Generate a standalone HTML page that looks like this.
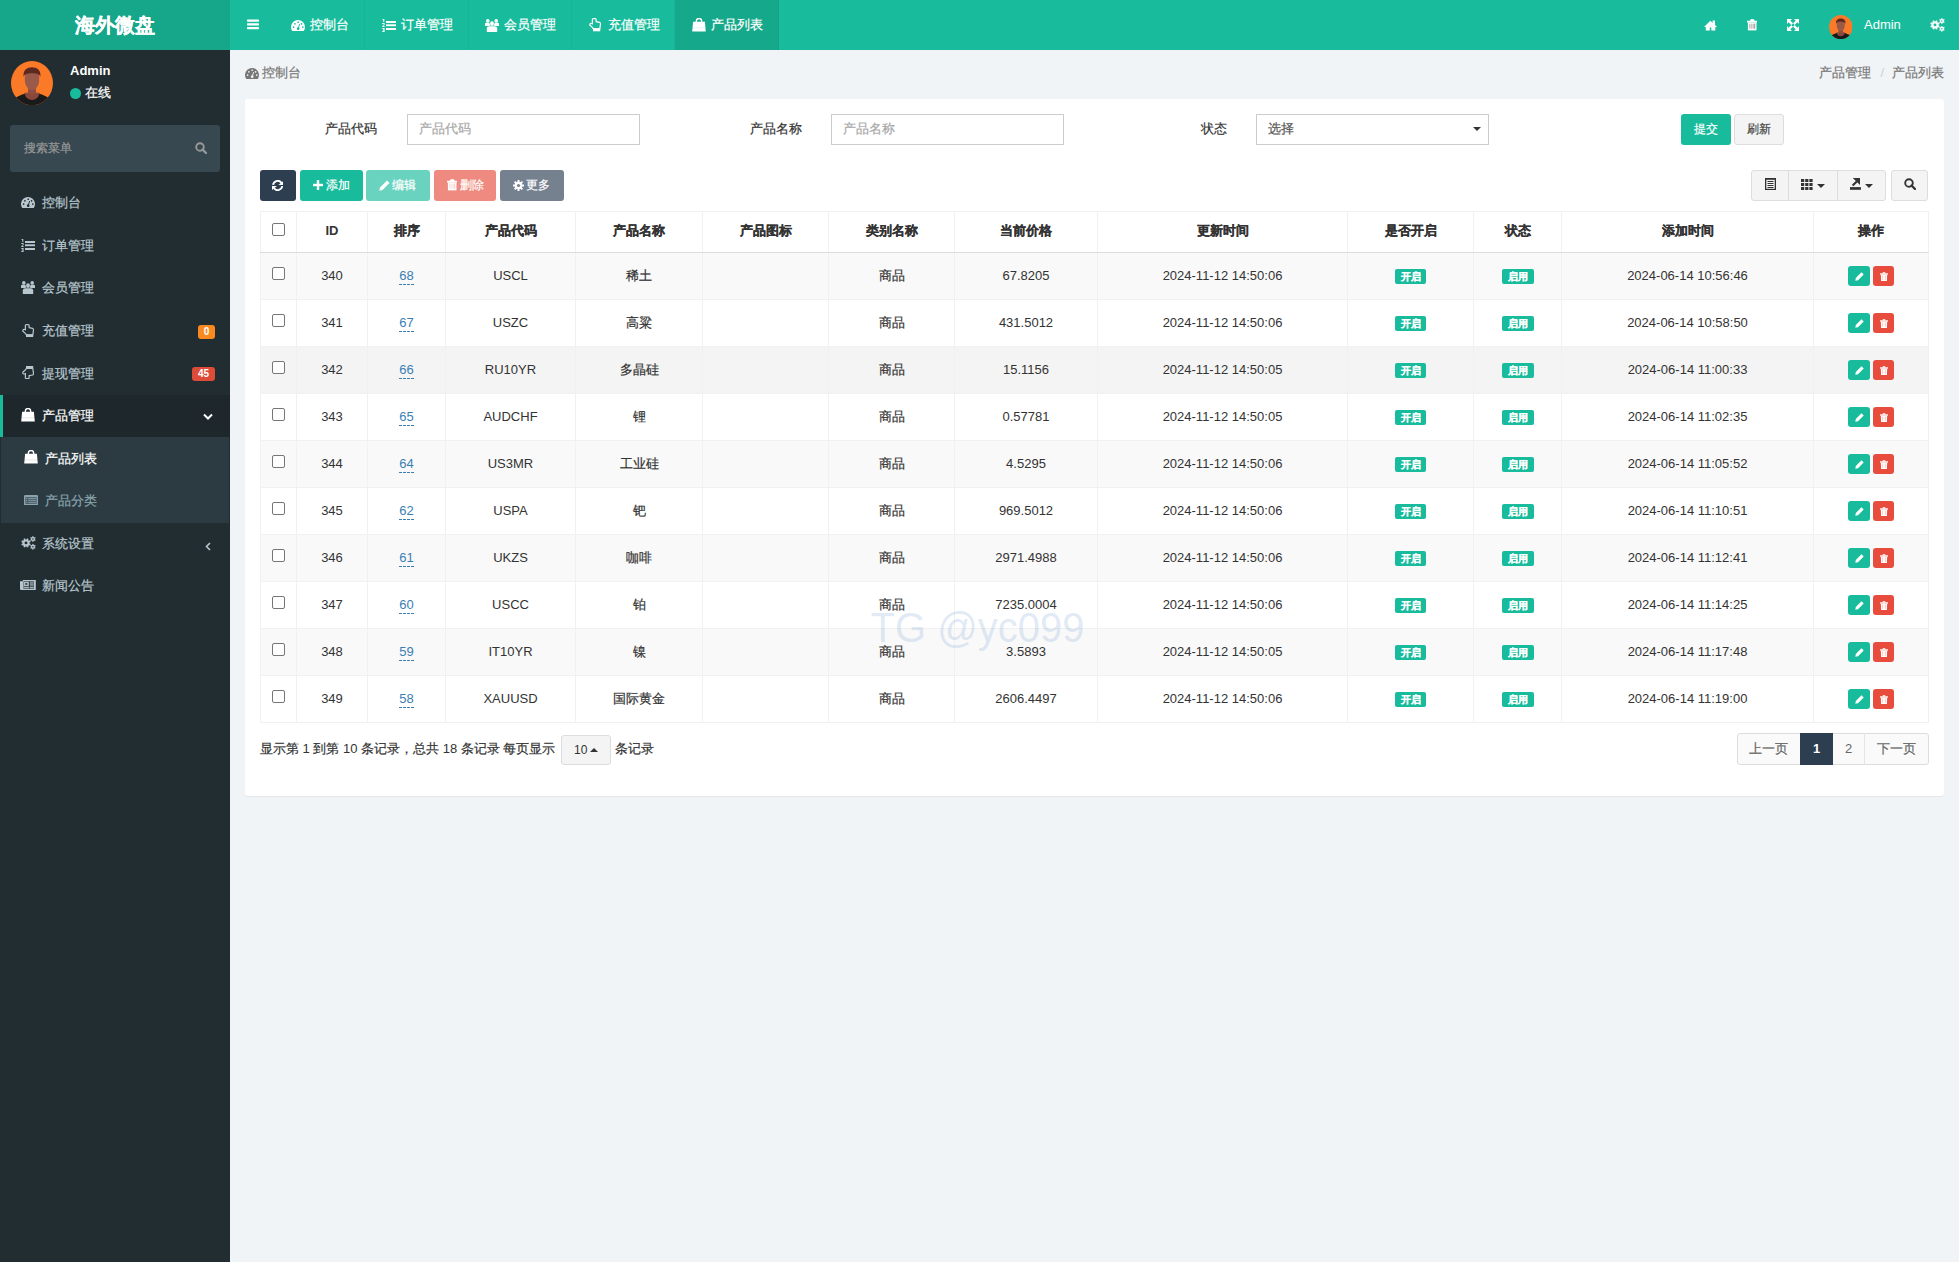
<!DOCTYPE html>
<html><head><meta charset="utf-8"><title>产品列表</title>
<style>
html,body{margin:0;padding:0;}
body{width:1959px;height:1262px;position:relative;overflow:hidden;background:#f1f4f6;
font-family:"Liberation Sans",sans-serif;font-size:13px;color:#333;}
.t{position:absolute;white-space:nowrap;line-height:18px;height:18px;}
svg{display:block}
.c{-webkit-text-stroke:0.2px currentColor}
</style></head><body>

<div style="position:absolute;left:0px;top:0px;width:230px;height:50px;background:#16a68a"></div>
<div style="position:absolute;left:230px;top:0px;width:1729px;height:50px;background:#18bc9c"></div>
<div class="t" style="left:0.0px;top:16px;width:230px;text-align:center;color:#fff;font-size:20px;font-weight:bold;line-height:18px"><span class="c">海外微盘</span></div>
<svg style="position:absolute;left:247px;top:19px;" width="12" height="11" viewBox="0 0 12 11" fill="#fff"><rect x="0" y="0.5" width="12" height="2.2" rx="0.6"/><rect x="0" y="4.3" width="12" height="2.1" rx="0.6"/><rect x="0" y="8" width="12" height="2.2" rx="0.6"/></svg>
<div style="position:absolute;left:364px;top:0px;width:1px;height:50px;background:rgba(0,0,0,0.04)"></div>
<svg style="position:absolute;left:291px;top:19.5px;" width="14" height="11" viewBox="0 0 14 11" fill="#fff"><path d="M1.25,11 A7,7 0 1 1 12.75,11 Z"/><g fill="#18bc9c"><ellipse cx="7.2" cy="2.3" rx="1" ry="0.7"/><circle cx="3.9" cy="3.8" r="0.85"/><circle cx="10.6" cy="3.8" r="0.85"/><circle cx="2.6" cy="7.1" r="0.85"/><circle cx="11.8" cy="7.1" r="0.85"/><circle cx="7.2" cy="8.7" r="1.35"/></g><path d="M7.2,8.5 L8.7,4" stroke="#18bc9c" stroke-width="0.9"/></svg>
<div class="t" style="left:310px;top:16px;color:#fff"><span class="c">控制台</span></div>
<div style="position:absolute;left:468px;top:0px;width:1px;height:50px;background:rgba(0,0,0,0.04)"></div>
<svg style="position:absolute;left:382px;top:18.5px;" width="14" height="13" viewBox="0 0 14 13" fill="#fff"><path d="M0.6,0 L2.3,0 L2.3,3 L1.3,3 L1.3,1 L0.6,1 Z"/><path d="M0.3,4 L2.6,4 L2.6,6 L1.2,7 L2.6,7 L2.6,8 L0.3,8 L0.3,7 L1.7,6 L1.7,5 L0.3,5 Z"/><path d="M0.3,9 L2.6,9 L2.6,13 L0.3,13 L0.3,12 L1.7,12 L1.7,11.5 L0.8,11.5 L0.8,10.5 L1.7,10.5 L1.7,10 L0.3,10 Z"/><rect x="4" y="2" width="10" height="2"/><rect x="4" y="5.3" width="10" height="1.9"/><rect x="4" y="9" width="10" height="2"/></svg>
<div class="t" style="left:401px;top:16px;color:#fff"><span class="c">订单管理</span></div>
<div style="position:absolute;left:571px;top:0px;width:1px;height:50px;background:rgba(0,0,0,0.04)"></div>
<svg style="position:absolute;left:485px;top:18.5px;" width="14" height="13" viewBox="0 0 14 13" fill="#fff"><circle cx="2.8" cy="1.9" r="1.8"/><circle cx="11.2" cy="1.9" r="1.8"/><ellipse cx="7" cy="4.6" rx="1.9" ry="2.4"/><path d="M0,7 L0,5 Q0,3.8 1.2,3.8 L4.3,3.8 Q4.8,5.3 5.6,6.6 L3.8,7 Z"/><path d="M14,7 L14,5 Q14,3.8 12.8,3.8 L9.7,3.8 Q9.2,5.3 8.4,6.6 L10.2,7 Z"/><path d="M1.8,13 L1.8,9.6 Q1.8,7.3 4.2,7.3 L9.8,7.3 Q12.2,7.3 12.2,9.6 L12.2,13 Z"/></svg>
<div class="t" style="left:504px;top:16px;color:#fff"><span class="c">会员管理</span></div>
<div style="position:absolute;left:674px;top:0px;width:1px;height:50px;background:rgba(0,0,0,0.04)"></div>
<svg style="position:absolute;left:589px;top:18.35px;" width="12" height="13.3" viewBox="0 0 12 13.3" fill="#fff"><path d="M3.4,5.8 L3.4,1.3 Q3.4,0.6 5.3,0.6 Q7.1,0.6 7.1,1.3 L7.1,3.6 L10.5,4.3 Q11.5,4.6 11.5,6 L10.8,10.8 L4.4,10.8 L3.6,9.6 L1,7.3 Q0.4,6.4 1.3,5.6 Q2.3,4.9 3.4,5.8 Z" fill="none" stroke="#fff" stroke-width="1.2" stroke-linejoin="round"/><rect x="4" y="10.4" width="7.2" height="2.9"/></svg>
<div class="t" style="left:608px;top:16px;color:#fff"><span class="c">充值管理</span></div>
<div style="position:absolute;left:675px;top:0px;width:104px;height:50px;background:#16a88b"></div>
<div style="position:absolute;left:778px;top:0px;width:1px;height:50px;background:rgba(0,0,0,0.04)"></div>
<svg style="position:absolute;left:692px;top:18.2px;" width="14" height="13.6" viewBox="0 0 14 13.6" fill="#fff"><path d="M4.3,6 L4.3,3.2 A2.7,2.7 0 0 1 9.7,3.2 L9.7,6" fill="none" stroke="#fff" stroke-width="1.4"/><path d="M1.1,3.8 L4,3.8 L4,5.5 L4.6,5.5 L4.6,3.8 L9.4,3.8 L9.4,5.5 L10,5.5 L10,3.8 L12.9,3.8 L13.8,13.5 L0.2,13.5 Z"/><rect x="0.5" y="9.6" width="13" height="0.7" fill="#18bc9c" opacity="0.18"/></svg>
<div class="t" style="left:711px;top:16px;color:#fff"><span class="c">产品列表</span></div>
<svg style="position:absolute;left:1704px;top:19.5px;" width="14" height="11" viewBox="0 0 14 11" fill="#fff"><path d="M6.3,0.8 L8.6,2.9 L8.6,0.6 L11,0.6 L11,5.1 L13.1,6.9 L11.3,6.9 L11.3,10.5 L7.3,10.5 L7.3,7.6 L5.8,7.6 L5.8,10.5 L1.8,10.5 L1.8,6.9 L0,6.9 Z"/></svg>
<svg style="position:absolute;left:1747px;top:19.3px;" width="10.4" height="11.4" viewBox="0 0 10.4 11.4" fill="#fff"><rect x="0" y="1.8" width="10.4" height="1.7"/><path d="M2.8,2 Q2.8,0 5.2,0 Q7.8,0 7.8,2 Z"/><path d="M0.9,3.4 L9.5,3.4 L9.5,11.4 L0.9,11.4 Z"/><g fill="#000" opacity="0.35"><rect x="2.4" y="4.7" width="1" height="5"/><rect x="4.4" y="4.7" width="1" height="5"/><rect x="6.4" y="4.7" width="1.8" height="5"/></g></svg>
<svg style="position:absolute;left:1787px;top:19.0px;" width="12" height="12" viewBox="0 0 12 12" fill="#fff"><path d="M0,0 L5,0 L3.3,1.7 L6,4.3 L4.3,6 L1.7,3.3 L0,5 Z"/><path d="M12,0 L7,0 L8.7,1.7 L6,4.3 L7.7,6 L10.3,3.3 L12,5 Z"/><path d="M0,12 L5,12 L3.3,10.3 L6,7.7 L4.3,6 L1.7,8.7 L0,7 Z"/><path d="M12,12 L7,12 L8.7,10.3 L6,7.7 L7.7,6 L10.3,8.7 L12,7 Z"/></svg>
<svg style="position:absolute;left:1829px;top:15.2px" width="23.5" height="24.2" viewBox="0 0 100 100" preserveAspectRatio="none"><defs><clipPath id="cp1829"><ellipse cx="50" cy="50" rx="50" ry="50"/></clipPath></defs><g clip-path="url(#cp1829)"><rect width="100" height="100" fill="#fb7a27"/><path d="M0,100 L10,84 C20,78 30,74 40,73 L60,73 C70,74 80,78 90,84 L100,100 Z" fill="#1a1a1a"/><path d="M32,72 L68,72 C66,82 60,88 50,88 C40,88 34,82 32,72 Z" fill="#8a473b"/><path d="M41,58 L59,58 L60,73 C55,77 45,77 40,73 Z" fill="#8e4e40"/><path d="M33,30 C33,22 40,20 50,20 C60,20 67,22 67,30 L67,44 C67,56 58,66 50,66 C42,66 33,56 33,44 Z" fill="#9a5a4a"/><path d="M30,36 C28,20 38,14 50,14 C62,14 72,20 70,36 C68,30 62,28 50,28 C38,28 32,30 30,36 Z" fill="#5e2a1f"/></g></svg>
<div class="t" style="left:1864px;top:16px;color:#fff">Admin</div>
<svg style="position:absolute;left:1930px;top:18.0px;" width="15" height="14" viewBox="0 0 15 14" fill="#fff"><circle cx="5" cy="6.9" r="3.5"/><rect x="4.15" y="2.20" width="1.7" height="2.00" transform="rotate(22.5 5 6.9)"/><rect x="4.15" y="2.20" width="1.7" height="2.00" transform="rotate(67.5 5 6.9)"/><rect x="4.15" y="2.20" width="1.7" height="2.00" transform="rotate(112.5 5 6.9)"/><rect x="4.15" y="2.20" width="1.7" height="2.00" transform="rotate(157.5 5 6.9)"/><rect x="4.15" y="2.20" width="1.7" height="2.00" transform="rotate(202.5 5 6.9)"/><rect x="4.15" y="2.20" width="1.7" height="2.00" transform="rotate(247.5 5 6.9)"/><rect x="4.15" y="2.20" width="1.7" height="2.00" transform="rotate(292.5 5 6.9)"/><rect x="4.15" y="2.20" width="1.7" height="2.00" transform="rotate(337.5 5 6.9)"/><circle cx="5" cy="6.9" r="1.45" fill="#18bc9c"/><circle cx="11.9" cy="3.0" r="2.0"/><rect x="11.30" y="0.15" width="1.2" height="1.65" transform="rotate(0.0 11.9 3.0)"/><rect x="11.30" y="0.15" width="1.2" height="1.65" transform="rotate(60.0 11.9 3.0)"/><rect x="11.30" y="0.15" width="1.2" height="1.65" transform="rotate(120.0 11.9 3.0)"/><rect x="11.30" y="0.15" width="1.2" height="1.65" transform="rotate(180.0 11.9 3.0)"/><rect x="11.30" y="0.15" width="1.2" height="1.65" transform="rotate(240.0 11.9 3.0)"/><rect x="11.30" y="0.15" width="1.2" height="1.65" transform="rotate(300.0 11.9 3.0)"/><circle cx="11.9" cy="3.0" r="0.75" fill="#18bc9c"/><circle cx="11.9" cy="10.8" r="2.0"/><rect x="11.30" y="7.95" width="1.2" height="1.65" transform="rotate(0.0 11.9 10.8)"/><rect x="11.30" y="7.95" width="1.2" height="1.65" transform="rotate(60.0 11.9 10.8)"/><rect x="11.30" y="7.95" width="1.2" height="1.65" transform="rotate(120.0 11.9 10.8)"/><rect x="11.30" y="7.95" width="1.2" height="1.65" transform="rotate(180.0 11.9 10.8)"/><rect x="11.30" y="7.95" width="1.2" height="1.65" transform="rotate(240.0 11.9 10.8)"/><rect x="11.30" y="7.95" width="1.2" height="1.65" transform="rotate(300.0 11.9 10.8)"/><circle cx="11.9" cy="10.8" r="0.75" fill="#18bc9c"/></svg>
<div style="position:absolute;left:0px;top:50px;width:230px;height:1212px;background:#222d32"></div>
<svg style="position:absolute;left:11.3px;top:60.6px" width="42" height="44.2" viewBox="0 0 100 100" preserveAspectRatio="none"><defs><clipPath id="cp11"><ellipse cx="50" cy="50" rx="50" ry="50"/></clipPath></defs><g clip-path="url(#cp11)"><rect width="100" height="100" fill="#fb7a27"/><path d="M0,100 L10,84 C20,78 30,74 40,73 L60,73 C70,74 80,78 90,84 L100,100 Z" fill="#1a1a1a"/><path d="M32,72 L68,72 C66,82 60,88 50,88 C40,88 34,82 32,72 Z" fill="#8a473b"/><path d="M41,58 L59,58 L60,73 C55,77 45,77 40,73 Z" fill="#8e4e40"/><path d="M33,30 C33,22 40,20 50,20 C60,20 67,22 67,30 L67,44 C67,56 58,66 50,66 C42,66 33,56 33,44 Z" fill="#9a5a4a"/><path d="M30,36 C28,20 38,14 50,14 C62,14 72,20 70,36 C68,30 62,28 50,28 C38,28 32,30 30,36 Z" fill="#5e2a1f"/></g></svg>
<div class="t" style="left:70px;top:62px;color:#fff;font-weight:bold">Admin</div>
<svg style="position:absolute;left:70px;top:88px;" width="11" height="11" viewBox="0 0 11 11" fill="#18bc9c"><circle cx="5.5" cy="5.5" r="5.5"/></svg>
<div class="t" style="left:85px;top:84px;color:#fff"><span class="c">在线</span></div>
<div style="position:absolute;left:10px;top:125px;width:210px;height:47px;background:#374850;border-radius:3px"></div>
<div class="t" style="left:24px;top:139px;color:#999;font-size:12px"><span class="c">搜索菜单</span></div>
<svg style="position:absolute;left:195px;top:142.0px;" width="12" height="12" viewBox="0 0 12 12" fill="#999"><circle cx="5" cy="5" r="3.8" fill="none" stroke="#999" stroke-width="1.9"/><path d="M7.5,7.5 L11,11" stroke="#999" stroke-width="2.3" stroke-linecap="round"/></svg>
<svg style="position:absolute;left:20.8px;top:197.3px;" width="14" height="11" viewBox="0 0 14 11" fill="#b8c7ce"><path d="M1.25,11 A7,7 0 1 1 12.75,11 Z"/><g fill="#222d32"><ellipse cx="7.2" cy="2.3" rx="1" ry="0.7"/><circle cx="3.9" cy="3.8" r="0.85"/><circle cx="10.6" cy="3.8" r="0.85"/><circle cx="2.6" cy="7.1" r="0.85"/><circle cx="11.8" cy="7.1" r="0.85"/><circle cx="7.2" cy="8.7" r="1.35"/></g><path d="M7.2,8.5 L8.7,4" stroke="#222d32" stroke-width="0.9"/></svg>
<div class="t" style="left:41.5px;top:194.3px;color:#b8c7ce"><span class="c">控制台</span></div>
<svg style="position:absolute;left:21px;top:238.97px;" width="14" height="13" viewBox="0 0 14 13" fill="#b8c7ce"><path d="M0.6,0 L2.3,0 L2.3,3 L1.3,3 L1.3,1 L0.6,1 Z"/><path d="M0.3,4 L2.6,4 L2.6,6 L1.2,7 L2.6,7 L2.6,8 L0.3,8 L0.3,7 L1.7,6 L1.7,5 L0.3,5 Z"/><path d="M0.3,9 L2.6,9 L2.6,13 L0.3,13 L0.3,12 L1.7,12 L1.7,11.5 L0.8,11.5 L0.8,10.5 L1.7,10.5 L1.7,10 L0.3,10 Z"/><rect x="4" y="2" width="10" height="2"/><rect x="4" y="5.3" width="10" height="1.9"/><rect x="4" y="9" width="10" height="2"/></svg>
<div class="t" style="left:41.5px;top:236.87px;color:#b8c7ce"><span class="c">订单管理</span></div>
<svg style="position:absolute;left:21px;top:281.34px;" width="14" height="13" viewBox="0 0 14 13" fill="#b8c7ce"><circle cx="2.8" cy="1.9" r="1.8"/><circle cx="11.2" cy="1.9" r="1.8"/><ellipse cx="7" cy="4.6" rx="1.9" ry="2.4"/><path d="M0,7 L0,5 Q0,3.8 1.2,3.8 L4.3,3.8 Q4.8,5.3 5.6,6.6 L3.8,7 Z"/><path d="M14,7 L14,5 Q14,3.8 12.8,3.8 L9.7,3.8 Q9.2,5.3 8.4,6.6 L10.2,7 Z"/><path d="M1.8,13 L1.8,9.6 Q1.8,7.3 4.2,7.3 L9.8,7.3 Q12.2,7.3 12.2,9.6 L12.2,13 Z"/></svg>
<div class="t" style="left:41.5px;top:279.44px;color:#b8c7ce"><span class="c">会员管理</span></div>
<svg style="position:absolute;left:21.9px;top:323.76000000000005px;" width="12" height="13.3" viewBox="0 0 12 13.3" fill="#b8c7ce"><path d="M3.4,5.8 L3.4,1.3 Q3.4,0.6 5.3,0.6 Q7.1,0.6 7.1,1.3 L7.1,3.6 L10.5,4.3 Q11.5,4.6 11.5,6 L10.8,10.8 L4.4,10.8 L3.6,9.6 L1,7.3 Q0.4,6.4 1.3,5.6 Q2.3,4.9 3.4,5.8 Z" fill="none" stroke="#b8c7ce" stroke-width="1.2" stroke-linejoin="round"/><rect x="4" y="10.4" width="7.2" height="2.9"/></svg>
<div class="t" style="left:41.5px;top:322.01000000000005px;color:#b8c7ce"><span class="c">充值管理</span></div>
<svg style="position:absolute;left:21.9px;top:365.73px;" width="12" height="13.3" viewBox="0 0 12 13.3" fill="#b8c7ce"><g transform="translate(0,13.3) scale(1,-1)"><path d="M3.4,5.8 L3.4,1.3 Q3.4,0.6 5.3,0.6 Q7.1,0.6 7.1,1.3 L7.1,3.6 L10.5,4.3 Q11.5,4.6 11.5,6 L10.8,10.8 L4.4,10.8 L3.6,9.6 L1,7.3 Q0.4,6.4 1.3,5.6 Q2.3,4.9 3.4,5.8 Z" fill="none" stroke="#b8c7ce" stroke-width="1.2" stroke-linejoin="round"/><rect x="4" y="10.4" width="7.2" height="2.9"/></g></svg>
<div class="t" style="left:41.5px;top:364.58px;color:#b8c7ce"><span class="c">提现管理</span></div>
<div style="position:absolute;left:0px;top:394.85px;width:230px;height:42.57px;background:#1e282c"></div>
<div style="position:absolute;left:0px;top:394.85px;width:3px;height:42.57px;background:#18bc9c"></div>
<svg style="position:absolute;left:21px;top:408.35px;" width="14" height="13.6" viewBox="0 0 14 13.6" fill="#fff"><path d="M4.3,6 L4.3,3.2 A2.7,2.7 0 0 1 9.7,3.2 L9.7,6" fill="none" stroke="#fff" stroke-width="1.4"/><path d="M1.1,3.8 L4,3.8 L4,5.5 L4.6,5.5 L4.6,3.8 L9.4,3.8 L9.4,5.5 L10,5.5 L10,3.8 L12.9,3.8 L13.8,13.5 L0.2,13.5 Z"/><rect x="0.5" y="9.6" width="13" height="0.7" fill="#1e282c" opacity="0.18"/></svg>
<div class="t" style="left:41.5px;top:407.15000000000003px;color:#fff"><span class="c">产品管理</span></div>
<div style="position:absolute;left:198px;top:324.5px;width:17px;height:14.5px;background:#fa8a20;border-radius:3px;color:#fff;font-size:10px;font-weight:bold;text-align:center;line-height:14px">0</div>
<div style="position:absolute;left:192px;top:367px;width:23px;height:14px;background:#dd4b39;border-radius:3px;color:#fff;font-size:10px;font-weight:bold;text-align:center;line-height:14px">45</div>
<svg style="position:absolute;left:203px;top:413px;" width="10" height="8" viewBox="0 0 10 8" fill="#fff"><path d="M1,1.5 L5,5.5 L9,1.5" stroke="#fff" stroke-width="2" fill="none"/></svg>
<div style="position:absolute;left:1px;top:437.42px;width:228px;height:85.14px;background:#2c3b41"></div>
<svg style="position:absolute;left:24px;top:450.42px;" width="14" height="13.6" viewBox="0 0 14 13.6" fill="#fff"><path d="M4.3,6 L4.3,3.2 A2.7,2.7 0 0 1 9.7,3.2 L9.7,6" fill="none" stroke="#fff" stroke-width="1.4"/><path d="M1.1,3.8 L4,3.8 L4,5.5 L4.6,5.5 L4.6,3.8 L9.4,3.8 L9.4,5.5 L10,5.5 L10,3.8 L12.9,3.8 L13.8,13.5 L0.2,13.5 Z"/><rect x="0.5" y="9.6" width="13" height="0.7" fill="#2c3b41" opacity="0.18"/></svg>
<div class="t" style="left:44.5px;top:449.72px;color:#fff"><span class="c">产品列表</span></div>
<svg style="position:absolute;left:24.1px;top:494.69000000000005px;" width="14" height="10.4" viewBox="0 0 14 10.4" fill="#8aa4af"><rect x="0" y="0" width="14" height="10.4" rx="1.2"/><rect x="1.4" y="2.2" width="11.2" height="6.8" fill="#2c3b41" opacity="0.75"/><g opacity="0.8"><rect x="2" y="3" width="1.4" height="1.3"/><rect x="4.2" y="3" width="7.8" height="1.3"/><rect x="2" y="5.1" width="1.4" height="1.2"/><rect x="4.2" y="5.1" width="7.8" height="1.2"/><rect x="2" y="7.1" width="1.4" height="1.2"/><rect x="4.2" y="7.1" width="7.8" height="1.2"/></g></svg>
<div class="t" style="left:44.5px;top:492.29px;color:#8aa4af"><span class="c">产品分类</span></div>
<svg style="position:absolute;left:20.5px;top:536.36px;" width="15" height="14" viewBox="0 0 15 14" fill="#b8c7ce"><circle cx="5" cy="6.9" r="3.5"/><rect x="4.15" y="2.20" width="1.7" height="2.00" transform="rotate(22.5 5 6.9)"/><rect x="4.15" y="2.20" width="1.7" height="2.00" transform="rotate(67.5 5 6.9)"/><rect x="4.15" y="2.20" width="1.7" height="2.00" transform="rotate(112.5 5 6.9)"/><rect x="4.15" y="2.20" width="1.7" height="2.00" transform="rotate(157.5 5 6.9)"/><rect x="4.15" y="2.20" width="1.7" height="2.00" transform="rotate(202.5 5 6.9)"/><rect x="4.15" y="2.20" width="1.7" height="2.00" transform="rotate(247.5 5 6.9)"/><rect x="4.15" y="2.20" width="1.7" height="2.00" transform="rotate(292.5 5 6.9)"/><rect x="4.15" y="2.20" width="1.7" height="2.00" transform="rotate(337.5 5 6.9)"/><circle cx="5" cy="6.9" r="1.45" fill="#222d32"/><circle cx="11.9" cy="3.0" r="2.0"/><rect x="11.30" y="0.15" width="1.2" height="1.65" transform="rotate(0.0 11.9 3.0)"/><rect x="11.30" y="0.15" width="1.2" height="1.65" transform="rotate(60.0 11.9 3.0)"/><rect x="11.30" y="0.15" width="1.2" height="1.65" transform="rotate(120.0 11.9 3.0)"/><rect x="11.30" y="0.15" width="1.2" height="1.65" transform="rotate(180.0 11.9 3.0)"/><rect x="11.30" y="0.15" width="1.2" height="1.65" transform="rotate(240.0 11.9 3.0)"/><rect x="11.30" y="0.15" width="1.2" height="1.65" transform="rotate(300.0 11.9 3.0)"/><circle cx="11.9" cy="3.0" r="0.75" fill="#222d32"/><circle cx="11.9" cy="10.8" r="2.0"/><rect x="11.30" y="7.95" width="1.2" height="1.65" transform="rotate(0.0 11.9 10.8)"/><rect x="11.30" y="7.95" width="1.2" height="1.65" transform="rotate(60.0 11.9 10.8)"/><rect x="11.30" y="7.95" width="1.2" height="1.65" transform="rotate(120.0 11.9 10.8)"/><rect x="11.30" y="7.95" width="1.2" height="1.65" transform="rotate(180.0 11.9 10.8)"/><rect x="11.30" y="7.95" width="1.2" height="1.65" transform="rotate(240.0 11.9 10.8)"/><rect x="11.30" y="7.95" width="1.2" height="1.65" transform="rotate(300.0 11.9 10.8)"/><circle cx="11.9" cy="10.8" r="0.75" fill="#222d32"/></svg>
<div class="t" style="left:41.5px;top:534.86px;color:#b8c7ce"><span class="c">系统设置</span></div>
<svg style="position:absolute;left:205px;top:542.0600000000001px;" width="6" height="9" viewBox="0 0 6 9" fill="#fff"><path d="M5,1 L1.5,4.5 L5,8" stroke="#b8c7ce" stroke-width="1.6" fill="none"/></svg>
<svg style="position:absolute;left:20.1px;top:579.83px;" width="16" height="10" viewBox="0 0 16 10" fill="#b8c7ce"><path d="M2.8,0 L15.8,0 L15.8,10 L1.2,10 Q0,10 0,8.8 L0,1.2 L2.8,1.2 Z"/><rect x="3.4" y="1.2" width="10.5" height="7.6" fill="#222d32" opacity="0.7"/><rect x="3.9" y="2" width="4.9" height="4" opacity="0.9"/><rect x="5.3" y="3.2" width="2" height="1.5" fill="#222d32"/><rect x="9.9" y="2.5" width="3.5" height="1" opacity="0.8"/><rect x="9.9" y="4.4" width="3.5" height="1" opacity="0.8"/><rect x="3.9" y="7" width="9.5" height="1" opacity="0.8"/><rect x="9.2" y="1.2" width="0.6" height="7.6" fill="#222d32"/></svg>
<div class="t" style="left:41.5px;top:577.4300000000001px;color:#b8c7ce"><span class="c">新闻公告</span></div>
<svg style="position:absolute;left:245px;top:68.0px;" width="14" height="11" viewBox="0 0 14 11" fill="#777"><path d="M1.25,11 A7,7 0 1 1 12.75,11 Z"/><g fill="#f1f4f6"><ellipse cx="7.2" cy="2.3" rx="1" ry="0.7"/><circle cx="3.9" cy="3.8" r="0.85"/><circle cx="10.6" cy="3.8" r="0.85"/><circle cx="2.6" cy="7.1" r="0.85"/><circle cx="11.8" cy="7.1" r="0.85"/><circle cx="7.2" cy="8.7" r="1.35"/></g><path d="M7.2,8.5 L8.7,4" stroke="#f1f4f6" stroke-width="0.9"/></svg>
<div class="t" style="left:261.5px;top:64px;color:#777"><span class="c">控制台</span></div>
<div class="t" style="right:15px;top:64px;color:#777"><span class="c">产品管理</span><span style="color:#ccc;padding:0 8px 0 9px">/</span><span class="c">产品列表</span></div>
<div style="position:absolute;left:245px;top:99px;width:1699px;height:697px;background:#fff;border-radius:3px;box-shadow:0 1px 1px rgba(0,0,0,0.05)"></div>
<div class="t" style="right:1582px;top:120px"><span class="c">产品代码</span></div>
<div style="position:absolute;left:407px;top:114px;width:233px;height:31px;box-sizing:border-box;border:1px solid #ccc;background:#fff"></div>
<div class="t" style="left:419px;top:120px;color:#a8a8a8"><span class="c">产品代码</span></div>
<div class="t" style="right:1157px;top:120px"><span class="c">产品名称</span></div>
<div style="position:absolute;left:831px;top:114px;width:233px;height:31px;box-sizing:border-box;border:1px solid #ccc;background:#fff"></div>
<div class="t" style="left:843px;top:120px;color:#a8a8a8"><span class="c">产品名称</span></div>
<div class="t" style="right:732px;top:120px"><span class="c">状态</span></div>
<div style="position:absolute;left:1256px;top:114px;width:233px;height:31px;box-sizing:border-box;border:1px solid #ccc;background:#fff"></div>
<div class="t" style="left:1268px;top:120px;color:#555"><span class="c">选择</span></div>
<svg style="position:absolute;left:1473px;top:127px;" width="8" height="4" viewBox="0 0 8 4" fill="#333"><path d="M0,0 L8,0 L4,4 Z"/></svg>
<div style="position:absolute;left:1681px;top:114px;width:50px;height:31px;background:#18bc9c;border-radius:3px;color:#fff;text-align:center;line-height:30px;font-size:12px"><span class="c">提交</span></div>
<div style="position:absolute;left:1734px;top:114px;width:50px;height:31px;box-sizing:border-box;background:#f4f4f4;border:1px solid #ddd;border-radius:3px;color:#444;text-align:center;line-height:28px;font-size:12px"><span class="c">刷新</span></div>
<div style="position:absolute;left:260px;top:170px;width:36px;height:30.5px;background:#2c3e50;border-radius:3px"></div>
<svg style="position:absolute;left:272px;top:179.5px;" width="11.3" height="11" viewBox="0 0 11.3 11" fill="#fff"><path d="M1.15,5.5 A4.5,4.5 0 0 1 9.4,2.9" fill="none" stroke="#fff" stroke-width="1.9"/><path d="M10.15,5.5 A4.5,4.5 0 0 1 1.9,8.1" fill="none" stroke="#fff" stroke-width="1.9"/><rect x="0" y="4.9" width="11.3" height="1.2" fill="#2c3e50"/><path d="M11.3,1 L11.3,4.9 L6.4,4.9 Z"/><path d="M0,10 L0,6.1 L4.9,6.1 Z"/></svg>
<div style="position:absolute;left:300px;top:170px;width:63px;height:30.5px;background:#18bc9c;border-radius:3px"></div>
<svg style="position:absolute;left:313px;top:180.0px;" width="10" height="10" viewBox="0 0 10 10" fill="#fff"><rect x="3.8" y="0" width="2.4" height="10"/><rect x="0" y="3.8" width="10" height="2.4"/></svg>
<div class="t" style="left:325.5px;top:176px;color:#fff;font-size:12px"><span class="c">添加</span></div>
<div style="position:absolute;left:366px;top:170px;width:64px;height:30.5px;background:#69d3bf;border-radius:3px"></div>
<svg style="position:absolute;left:379px;top:179.5px;" width="11" height="11" viewBox="0 0 11 11" fill="#fff"><path d="M8,0.5 L10.5,3 L3.5,10 L0.3,10.7 L1,7.5 Z"/></svg>
<div class="t" style="left:391.5px;top:176px;color:#fff;font-size:12px"><span class="c">编辑</span></div>
<div style="position:absolute;left:434px;top:170px;width:62px;height:30.5px;background:#ef8a80;border-radius:3px"></div>
<svg style="position:absolute;left:447px;top:179.3px;" width="10.4" height="11.4" viewBox="0 0 10.4 11.4" fill="#fff"><rect x="0" y="1.8" width="10.4" height="1.7"/><path d="M2.8,2 Q2.8,0 5.2,0 Q7.8,0 7.8,2 Z"/><path d="M0.9,3.4 L9.5,3.4 L9.5,11.4 L0.9,11.4 Z"/><g fill="#ef8a80" opacity="0.35"><rect x="2.4" y="4.7" width="1" height="5"/><rect x="4.4" y="4.7" width="1" height="5"/><rect x="6.4" y="4.7" width="1.8" height="5"/></g></svg>
<div class="t" style="left:459.5px;top:176px;color:#fff;font-size:12px"><span class="c">删除</span></div>
<div style="position:absolute;left:500px;top:170px;width:64px;height:30.5px;background:#768190;border-radius:3px"></div>
<svg style="position:absolute;left:513px;top:179.5px;" width="11" height="11" viewBox="0 0 11 11" fill="#fff"><circle cx="5.5" cy="5.5" r="3.8"/><rect x="4.5" y="0" width="2" height="3" transform="rotate(0 5.5 5.5)"/><rect x="4.5" y="0" width="2" height="3" transform="rotate(45 5.5 5.5)"/><rect x="4.5" y="0" width="2" height="3" transform="rotate(90 5.5 5.5)"/><rect x="4.5" y="0" width="2" height="3" transform="rotate(135 5.5 5.5)"/><rect x="4.5" y="0" width="2" height="3" transform="rotate(180 5.5 5.5)"/><rect x="4.5" y="0" width="2" height="3" transform="rotate(225 5.5 5.5)"/><rect x="4.5" y="0" width="2" height="3" transform="rotate(270 5.5 5.5)"/><rect x="4.5" y="0" width="2" height="3" transform="rotate(315 5.5 5.5)"/><circle cx="5.5" cy="5.5" r="1.6" fill="#768190"/></svg>
<div class="t" style="left:525.5px;top:176px;color:#fff;font-size:12px"><span class="c">更多</span></div>
<div style="position:absolute;left:1751px;top:170px;width:135px;height:30.5px;box-sizing:border-box;background:#f4f4f4;border:1px solid #ddd;border-radius:3px"></div>
<div style="position:absolute;left:1788px;top:170px;width:1px;height:30.5px;background:#ddd"></div>
<div style="position:absolute;left:1837px;top:170px;width:1px;height:30.5px;background:#ddd"></div>
<div style="position:absolute;left:1891px;top:170px;width:37px;height:30.5px;box-sizing:border-box;background:#f4f4f4;border:1px solid #ddd;border-radius:3px"></div>
<svg style="position:absolute;left:1765px;top:178.0px;" width="11" height="12" viewBox="0 0 11 12" fill="#333"><rect x="0" y="0" width="11" height="12"/><rect x="1.3" y="1.8" width="8.4" height="9" fill="#f4f4f4"/><rect x="2.5" y="3" width="6" height="1"/><rect x="2.5" y="5" width="6" height="1"/><rect x="2.5" y="7" width="6" height="1"/><rect x="2.5" y="9" width="6" height="1"/></svg>
<svg style="position:absolute;left:1801px;top:179.0px;" width="12" height="11" viewBox="0 0 12 11" fill="#333"><rect x="0.0" y="0" width="3.2" height="3"/><rect x="0.0" y="4" width="3.2" height="3"/><rect x="0.0" y="8" width="3.2" height="3"/><rect x="4.2" y="0" width="3.2" height="3"/><rect x="4.2" y="4" width="3.2" height="3"/><rect x="4.2" y="8" width="3.2" height="3"/><rect x="8.4" y="0" width="3.2" height="3"/><rect x="8.4" y="4" width="3.2" height="3"/><rect x="8.4" y="8" width="3.2" height="3"/></svg>
<svg style="position:absolute;left:1817px;top:184px;" width="8" height="4" viewBox="0 0 8 4" fill="#333"><path d="M0,0 L8,0 L4,4 Z"/></svg>
<svg style="position:absolute;left:1850px;top:178.0px;" width="11" height="12" viewBox="0 0 11 12" fill="#333"><rect x="0" y="9.1" width="10.9" height="2.7"/><path d="M2.8,0 L10,0 L10,6.9 Z"/><path d="M6.8,3.4 L2.6,7.4" stroke="#333" stroke-width="2.1"/></svg>
<svg style="position:absolute;left:1865px;top:184px;" width="8" height="4" viewBox="0 0 8 4" fill="#333"><path d="M0,0 L8,0 L4,4 Z"/></svg>
<svg style="position:absolute;left:1904px;top:178.0px;" width="12" height="12" viewBox="0 0 12 12" fill="#333"><circle cx="5" cy="5" r="3.8" fill="none" stroke="#333" stroke-width="1.9"/><path d="M7.5,7.5 L11,11" stroke="#333" stroke-width="2.3" stroke-linecap="round"/></svg>
<div style="position:absolute;left:261px;top:253px;width:1667px;height:46px;background:#f9f9f9"></div>
<div style="position:absolute;left:261px;top:347px;width:1667px;height:46px;background:#f4f4f4"></div>
<div style="position:absolute;left:261px;top:441px;width:1667px;height:46px;background:#f9f9f9"></div>
<div style="position:absolute;left:261px;top:535px;width:1667px;height:46px;background:#f9f9f9"></div>
<div style="position:absolute;left:261px;top:629px;width:1667px;height:46px;background:#f9f9f9"></div>
<div style="position:absolute;left:260px;top:211px;width:1668px;height:1px;background:#f1f1f1"></div>
<div style="position:absolute;left:260px;top:299px;width:1668px;height:1px;background:#f1f1f1"></div>
<div style="position:absolute;left:260px;top:346px;width:1668px;height:1px;background:#f1f1f1"></div>
<div style="position:absolute;left:260px;top:393px;width:1668px;height:1px;background:#f1f1f1"></div>
<div style="position:absolute;left:260px;top:440px;width:1668px;height:1px;background:#f1f1f1"></div>
<div style="position:absolute;left:260px;top:487px;width:1668px;height:1px;background:#f1f1f1"></div>
<div style="position:absolute;left:260px;top:534px;width:1668px;height:1px;background:#f1f1f1"></div>
<div style="position:absolute;left:260px;top:581px;width:1668px;height:1px;background:#f1f1f1"></div>
<div style="position:absolute;left:260px;top:628px;width:1668px;height:1px;background:#f1f1f1"></div>
<div style="position:absolute;left:260px;top:675px;width:1668px;height:1px;background:#f1f1f1"></div>
<div style="position:absolute;left:260px;top:722px;width:1668px;height:1px;background:#f1f1f1"></div>
<div style="position:absolute;left:260px;top:211px;width:1px;height:512px;background:#f1f1f1"></div>
<div style="position:absolute;left:296px;top:211px;width:1px;height:512px;background:#f1f1f1"></div>
<div style="position:absolute;left:367px;top:211px;width:1px;height:512px;background:#f1f1f1"></div>
<div style="position:absolute;left:445px;top:211px;width:1px;height:512px;background:#f1f1f1"></div>
<div style="position:absolute;left:575px;top:211px;width:1px;height:512px;background:#f1f1f1"></div>
<div style="position:absolute;left:702px;top:211px;width:1px;height:512px;background:#f1f1f1"></div>
<div style="position:absolute;left:828px;top:211px;width:1px;height:512px;background:#f1f1f1"></div>
<div style="position:absolute;left:954px;top:211px;width:1px;height:512px;background:#f1f1f1"></div>
<div style="position:absolute;left:1097px;top:211px;width:1px;height:512px;background:#f1f1f1"></div>
<div style="position:absolute;left:1347px;top:211px;width:1px;height:512px;background:#f1f1f1"></div>
<div style="position:absolute;left:1473px;top:211px;width:1px;height:512px;background:#f1f1f1"></div>
<div style="position:absolute;left:1561px;top:211px;width:1px;height:512px;background:#f1f1f1"></div>
<div style="position:absolute;left:1813px;top:211px;width:1px;height:512px;background:#f1f1f1"></div>
<div style="position:absolute;left:1928px;top:211px;width:1px;height:512px;background:#f1f1f1"></div>
<div style="position:absolute;left:260px;top:252px;width:1669px;height:1px;background:#dcdcdc"></div>
<div style="position:absolute;left:272px;top:223px;width:13px;height:13px;box-sizing:border-box;border:1px solid #767676;border-radius:2px;background:#fff"></div>
<div class="t" style="left:296.5px;top:222px;width:71px;text-align:center;font-weight:bold">ID</div>
<div class="t" style="left:367.5px;top:222px;width:78px;text-align:center;font-weight:bold"><span class="c">排序</span></div>
<div class="t" style="left:445.5px;top:222px;width:130px;text-align:center;font-weight:bold"><span class="c">产品代码</span></div>
<div class="t" style="left:575.5px;top:222px;width:127px;text-align:center;font-weight:bold"><span class="c">产品名称</span></div>
<div class="t" style="left:702.5px;top:222px;width:126px;text-align:center;font-weight:bold"><span class="c">产品图标</span></div>
<div class="t" style="left:828.5px;top:222px;width:126px;text-align:center;font-weight:bold"><span class="c">类别名称</span></div>
<div class="t" style="left:954.5px;top:222px;width:143px;text-align:center;font-weight:bold"><span class="c">当前价格</span></div>
<div class="t" style="left:1097.5px;top:222px;width:250px;text-align:center;font-weight:bold"><span class="c">更新时间</span></div>
<div class="t" style="left:1347.5px;top:222px;width:126px;text-align:center;font-weight:bold"><span class="c">是否开启</span></div>
<div class="t" style="left:1473.5px;top:222px;width:88px;text-align:center;font-weight:bold"><span class="c">状态</span></div>
<div class="t" style="left:1561.5px;top:222px;width:252px;text-align:center;font-weight:bold"><span class="c">添加时间</span></div>
<div class="t" style="left:1813.5px;top:222px;width:115px;text-align:center;font-weight:bold"><span class="c">操作</span></div>
<div style="position:absolute;left:272px;top:267.0px;width:13px;height:13px;box-sizing:border-box;border:1px solid #767676;border-radius:2px;background:#fff"></div>
<div class="t" style="left:296.5px;top:266.5px;width:71px;text-align:center;">340</div>
<div class="t" style="left:445.5px;top:266.5px;width:130px;text-align:center;">USCL</div>
<div class="t" style="left:575.5px;top:266.5px;width:127px;text-align:center;"><span class="c">稀土</span></div>
<div class="t" style="left:828.5px;top:266.5px;width:126px;text-align:center;"><span class="c">商品</span></div>
<div class="t" style="left:954.5px;top:266.5px;width:143px;text-align:center;">67.8205</div>
<div class="t" style="left:1097.5px;top:266.5px;width:250px;text-align:center;">2024-11-12 14:50:06</div>
<div class="t" style="left:1561.5px;top:266.5px;width:252px;text-align:center;">2024-06-14 10:56:46</div>
<div class="t" style="left:356.5px;top:266.5px;width:100px;text-align:center"><span style="color:#3a7fb4;border-bottom:1px dashed #3a7fb4;line-height:16px;display:inline-block">68</span></div>
<div style="position:absolute;left:1395px;top:269.0px;width:31px;height:15px;background:#18bc9c;border-radius:2px;color:#fff;font-size:10px;font-weight:bold;text-align:center;line-height:15px"><span class="c">开启</span></div>
<div style="position:absolute;left:1502px;top:269.0px;width:32px;height:15px;background:#18bc9c;border-radius:2px;color:#fff;font-size:10px;font-weight:bold;text-align:center;line-height:15px"><span class="c">启用</span></div>
<div style="position:absolute;left:1848px;top:266.0px;width:22px;height:20px;background:#18bc9c;border-radius:3px"></div>
<svg style="position:absolute;left:1854.5px;top:271.5px;" width="9" height="9" viewBox="0 0 9 9" fill="#fff"><path d="M6.5,0.3 L8.7,2.5 L3,8.2 L0.3,8.7 L0.8,6 Z"/></svg>
<div style="position:absolute;left:1873px;top:266.0px;width:21px;height:20px;background:#e74c3c;border-radius:3px"></div>
<svg style="position:absolute;left:1879.5px;top:271.5px;" width="8" height="9" viewBox="0 0 8 9" fill="#fff"><rect x="0" y="1.3" width="8" height="1.3"/><path d="M2.3,1.5 Q2.3,0 4,0 Q5.7,0 5.7,1.5 Z"/><path d="M0.8,2.6 L7.2,2.6 L6.9,9 L1.1,9 Z"/><g fill="#e74c3c" opacity="0.35"><rect x="2.3" y="3.6" width="0.8" height="4.2"/><rect x="4.9" y="3.6" width="0.8" height="4.2"/></g></svg>
<div style="position:absolute;left:272px;top:314.0px;width:13px;height:13px;box-sizing:border-box;border:1px solid #767676;border-radius:2px;background:#fff"></div>
<div class="t" style="left:296.5px;top:313.5px;width:71px;text-align:center;">341</div>
<div class="t" style="left:445.5px;top:313.5px;width:130px;text-align:center;">USZC</div>
<div class="t" style="left:575.5px;top:313.5px;width:127px;text-align:center;"><span class="c">高粱</span></div>
<div class="t" style="left:828.5px;top:313.5px;width:126px;text-align:center;"><span class="c">商品</span></div>
<div class="t" style="left:954.5px;top:313.5px;width:143px;text-align:center;">431.5012</div>
<div class="t" style="left:1097.5px;top:313.5px;width:250px;text-align:center;">2024-11-12 14:50:06</div>
<div class="t" style="left:1561.5px;top:313.5px;width:252px;text-align:center;">2024-06-14 10:58:50</div>
<div class="t" style="left:356.5px;top:313.5px;width:100px;text-align:center"><span style="color:#3a7fb4;border-bottom:1px dashed #3a7fb4;line-height:16px;display:inline-block">67</span></div>
<div style="position:absolute;left:1395px;top:316.0px;width:31px;height:15px;background:#18bc9c;border-radius:2px;color:#fff;font-size:10px;font-weight:bold;text-align:center;line-height:15px"><span class="c">开启</span></div>
<div style="position:absolute;left:1502px;top:316.0px;width:32px;height:15px;background:#18bc9c;border-radius:2px;color:#fff;font-size:10px;font-weight:bold;text-align:center;line-height:15px"><span class="c">启用</span></div>
<div style="position:absolute;left:1848px;top:313.0px;width:22px;height:20px;background:#18bc9c;border-radius:3px"></div>
<svg style="position:absolute;left:1854.5px;top:318.5px;" width="9" height="9" viewBox="0 0 9 9" fill="#fff"><path d="M6.5,0.3 L8.7,2.5 L3,8.2 L0.3,8.7 L0.8,6 Z"/></svg>
<div style="position:absolute;left:1873px;top:313.0px;width:21px;height:20px;background:#e74c3c;border-radius:3px"></div>
<svg style="position:absolute;left:1879.5px;top:318.5px;" width="8" height="9" viewBox="0 0 8 9" fill="#fff"><rect x="0" y="1.3" width="8" height="1.3"/><path d="M2.3,1.5 Q2.3,0 4,0 Q5.7,0 5.7,1.5 Z"/><path d="M0.8,2.6 L7.2,2.6 L6.9,9 L1.1,9 Z"/><g fill="#e74c3c" opacity="0.35"><rect x="2.3" y="3.6" width="0.8" height="4.2"/><rect x="4.9" y="3.6" width="0.8" height="4.2"/></g></svg>
<div style="position:absolute;left:272px;top:361.0px;width:13px;height:13px;box-sizing:border-box;border:1px solid #767676;border-radius:2px;background:#fff"></div>
<div class="t" style="left:296.5px;top:360.5px;width:71px;text-align:center;">342</div>
<div class="t" style="left:445.5px;top:360.5px;width:130px;text-align:center;">RU10YR</div>
<div class="t" style="left:575.5px;top:360.5px;width:127px;text-align:center;"><span class="c">多晶硅</span></div>
<div class="t" style="left:828.5px;top:360.5px;width:126px;text-align:center;"><span class="c">商品</span></div>
<div class="t" style="left:954.5px;top:360.5px;width:143px;text-align:center;">15.1156</div>
<div class="t" style="left:1097.5px;top:360.5px;width:250px;text-align:center;">2024-11-12 14:50:05</div>
<div class="t" style="left:1561.5px;top:360.5px;width:252px;text-align:center;">2024-06-14 11:00:33</div>
<div class="t" style="left:356.5px;top:360.5px;width:100px;text-align:center"><span style="color:#3a7fb4;border-bottom:1px dashed #3a7fb4;line-height:16px;display:inline-block">66</span></div>
<div style="position:absolute;left:1395px;top:363.0px;width:31px;height:15px;background:#18bc9c;border-radius:2px;color:#fff;font-size:10px;font-weight:bold;text-align:center;line-height:15px"><span class="c">开启</span></div>
<div style="position:absolute;left:1502px;top:363.0px;width:32px;height:15px;background:#18bc9c;border-radius:2px;color:#fff;font-size:10px;font-weight:bold;text-align:center;line-height:15px"><span class="c">启用</span></div>
<div style="position:absolute;left:1848px;top:360.0px;width:22px;height:20px;background:#18bc9c;border-radius:3px"></div>
<svg style="position:absolute;left:1854.5px;top:365.5px;" width="9" height="9" viewBox="0 0 9 9" fill="#fff"><path d="M6.5,0.3 L8.7,2.5 L3,8.2 L0.3,8.7 L0.8,6 Z"/></svg>
<div style="position:absolute;left:1873px;top:360.0px;width:21px;height:20px;background:#e74c3c;border-radius:3px"></div>
<svg style="position:absolute;left:1879.5px;top:365.5px;" width="8" height="9" viewBox="0 0 8 9" fill="#fff"><rect x="0" y="1.3" width="8" height="1.3"/><path d="M2.3,1.5 Q2.3,0 4,0 Q5.7,0 5.7,1.5 Z"/><path d="M0.8,2.6 L7.2,2.6 L6.9,9 L1.1,9 Z"/><g fill="#e74c3c" opacity="0.35"><rect x="2.3" y="3.6" width="0.8" height="4.2"/><rect x="4.9" y="3.6" width="0.8" height="4.2"/></g></svg>
<div style="position:absolute;left:272px;top:408.0px;width:13px;height:13px;box-sizing:border-box;border:1px solid #767676;border-radius:2px;background:#fff"></div>
<div class="t" style="left:296.5px;top:407.5px;width:71px;text-align:center;">343</div>
<div class="t" style="left:445.5px;top:407.5px;width:130px;text-align:center;">AUDCHF</div>
<div class="t" style="left:575.5px;top:407.5px;width:127px;text-align:center;"><span class="c">锂</span></div>
<div class="t" style="left:828.5px;top:407.5px;width:126px;text-align:center;"><span class="c">商品</span></div>
<div class="t" style="left:954.5px;top:407.5px;width:143px;text-align:center;">0.57781</div>
<div class="t" style="left:1097.5px;top:407.5px;width:250px;text-align:center;">2024-11-12 14:50:05</div>
<div class="t" style="left:1561.5px;top:407.5px;width:252px;text-align:center;">2024-06-14 11:02:35</div>
<div class="t" style="left:356.5px;top:407.5px;width:100px;text-align:center"><span style="color:#3a7fb4;border-bottom:1px dashed #3a7fb4;line-height:16px;display:inline-block">65</span></div>
<div style="position:absolute;left:1395px;top:410.0px;width:31px;height:15px;background:#18bc9c;border-radius:2px;color:#fff;font-size:10px;font-weight:bold;text-align:center;line-height:15px"><span class="c">开启</span></div>
<div style="position:absolute;left:1502px;top:410.0px;width:32px;height:15px;background:#18bc9c;border-radius:2px;color:#fff;font-size:10px;font-weight:bold;text-align:center;line-height:15px"><span class="c">启用</span></div>
<div style="position:absolute;left:1848px;top:407.0px;width:22px;height:20px;background:#18bc9c;border-radius:3px"></div>
<svg style="position:absolute;left:1854.5px;top:412.5px;" width="9" height="9" viewBox="0 0 9 9" fill="#fff"><path d="M6.5,0.3 L8.7,2.5 L3,8.2 L0.3,8.7 L0.8,6 Z"/></svg>
<div style="position:absolute;left:1873px;top:407.0px;width:21px;height:20px;background:#e74c3c;border-radius:3px"></div>
<svg style="position:absolute;left:1879.5px;top:412.5px;" width="8" height="9" viewBox="0 0 8 9" fill="#fff"><rect x="0" y="1.3" width="8" height="1.3"/><path d="M2.3,1.5 Q2.3,0 4,0 Q5.7,0 5.7,1.5 Z"/><path d="M0.8,2.6 L7.2,2.6 L6.9,9 L1.1,9 Z"/><g fill="#e74c3c" opacity="0.35"><rect x="2.3" y="3.6" width="0.8" height="4.2"/><rect x="4.9" y="3.6" width="0.8" height="4.2"/></g></svg>
<div style="position:absolute;left:272px;top:455.0px;width:13px;height:13px;box-sizing:border-box;border:1px solid #767676;border-radius:2px;background:#fff"></div>
<div class="t" style="left:296.5px;top:454.5px;width:71px;text-align:center;">344</div>
<div class="t" style="left:445.5px;top:454.5px;width:130px;text-align:center;">US3MR</div>
<div class="t" style="left:575.5px;top:454.5px;width:127px;text-align:center;"><span class="c">工业硅</span></div>
<div class="t" style="left:828.5px;top:454.5px;width:126px;text-align:center;"><span class="c">商品</span></div>
<div class="t" style="left:954.5px;top:454.5px;width:143px;text-align:center;">4.5295</div>
<div class="t" style="left:1097.5px;top:454.5px;width:250px;text-align:center;">2024-11-12 14:50:06</div>
<div class="t" style="left:1561.5px;top:454.5px;width:252px;text-align:center;">2024-06-14 11:05:52</div>
<div class="t" style="left:356.5px;top:454.5px;width:100px;text-align:center"><span style="color:#3a7fb4;border-bottom:1px dashed #3a7fb4;line-height:16px;display:inline-block">64</span></div>
<div style="position:absolute;left:1395px;top:457.0px;width:31px;height:15px;background:#18bc9c;border-radius:2px;color:#fff;font-size:10px;font-weight:bold;text-align:center;line-height:15px"><span class="c">开启</span></div>
<div style="position:absolute;left:1502px;top:457.0px;width:32px;height:15px;background:#18bc9c;border-radius:2px;color:#fff;font-size:10px;font-weight:bold;text-align:center;line-height:15px"><span class="c">启用</span></div>
<div style="position:absolute;left:1848px;top:454.0px;width:22px;height:20px;background:#18bc9c;border-radius:3px"></div>
<svg style="position:absolute;left:1854.5px;top:459.5px;" width="9" height="9" viewBox="0 0 9 9" fill="#fff"><path d="M6.5,0.3 L8.7,2.5 L3,8.2 L0.3,8.7 L0.8,6 Z"/></svg>
<div style="position:absolute;left:1873px;top:454.0px;width:21px;height:20px;background:#e74c3c;border-radius:3px"></div>
<svg style="position:absolute;left:1879.5px;top:459.5px;" width="8" height="9" viewBox="0 0 8 9" fill="#fff"><rect x="0" y="1.3" width="8" height="1.3"/><path d="M2.3,1.5 Q2.3,0 4,0 Q5.7,0 5.7,1.5 Z"/><path d="M0.8,2.6 L7.2,2.6 L6.9,9 L1.1,9 Z"/><g fill="#e74c3c" opacity="0.35"><rect x="2.3" y="3.6" width="0.8" height="4.2"/><rect x="4.9" y="3.6" width="0.8" height="4.2"/></g></svg>
<div style="position:absolute;left:272px;top:502.0px;width:13px;height:13px;box-sizing:border-box;border:1px solid #767676;border-radius:2px;background:#fff"></div>
<div class="t" style="left:296.5px;top:501.5px;width:71px;text-align:center;">345</div>
<div class="t" style="left:445.5px;top:501.5px;width:130px;text-align:center;">USPA</div>
<div class="t" style="left:575.5px;top:501.5px;width:127px;text-align:center;"><span class="c">钯</span></div>
<div class="t" style="left:828.5px;top:501.5px;width:126px;text-align:center;"><span class="c">商品</span></div>
<div class="t" style="left:954.5px;top:501.5px;width:143px;text-align:center;">969.5012</div>
<div class="t" style="left:1097.5px;top:501.5px;width:250px;text-align:center;">2024-11-12 14:50:06</div>
<div class="t" style="left:1561.5px;top:501.5px;width:252px;text-align:center;">2024-06-14 11:10:51</div>
<div class="t" style="left:356.5px;top:501.5px;width:100px;text-align:center"><span style="color:#3a7fb4;border-bottom:1px dashed #3a7fb4;line-height:16px;display:inline-block">62</span></div>
<div style="position:absolute;left:1395px;top:504.0px;width:31px;height:15px;background:#18bc9c;border-radius:2px;color:#fff;font-size:10px;font-weight:bold;text-align:center;line-height:15px"><span class="c">开启</span></div>
<div style="position:absolute;left:1502px;top:504.0px;width:32px;height:15px;background:#18bc9c;border-radius:2px;color:#fff;font-size:10px;font-weight:bold;text-align:center;line-height:15px"><span class="c">启用</span></div>
<div style="position:absolute;left:1848px;top:501.0px;width:22px;height:20px;background:#18bc9c;border-radius:3px"></div>
<svg style="position:absolute;left:1854.5px;top:506.5px;" width="9" height="9" viewBox="0 0 9 9" fill="#fff"><path d="M6.5,0.3 L8.7,2.5 L3,8.2 L0.3,8.7 L0.8,6 Z"/></svg>
<div style="position:absolute;left:1873px;top:501.0px;width:21px;height:20px;background:#e74c3c;border-radius:3px"></div>
<svg style="position:absolute;left:1879.5px;top:506.5px;" width="8" height="9" viewBox="0 0 8 9" fill="#fff"><rect x="0" y="1.3" width="8" height="1.3"/><path d="M2.3,1.5 Q2.3,0 4,0 Q5.7,0 5.7,1.5 Z"/><path d="M0.8,2.6 L7.2,2.6 L6.9,9 L1.1,9 Z"/><g fill="#e74c3c" opacity="0.35"><rect x="2.3" y="3.6" width="0.8" height="4.2"/><rect x="4.9" y="3.6" width="0.8" height="4.2"/></g></svg>
<div style="position:absolute;left:272px;top:549.0px;width:13px;height:13px;box-sizing:border-box;border:1px solid #767676;border-radius:2px;background:#fff"></div>
<div class="t" style="left:296.5px;top:548.5px;width:71px;text-align:center;">346</div>
<div class="t" style="left:445.5px;top:548.5px;width:130px;text-align:center;">UKZS</div>
<div class="t" style="left:575.5px;top:548.5px;width:127px;text-align:center;"><span class="c">咖啡</span></div>
<div class="t" style="left:828.5px;top:548.5px;width:126px;text-align:center;"><span class="c">商品</span></div>
<div class="t" style="left:954.5px;top:548.5px;width:143px;text-align:center;">2971.4988</div>
<div class="t" style="left:1097.5px;top:548.5px;width:250px;text-align:center;">2024-11-12 14:50:06</div>
<div class="t" style="left:1561.5px;top:548.5px;width:252px;text-align:center;">2024-06-14 11:12:41</div>
<div class="t" style="left:356.5px;top:548.5px;width:100px;text-align:center"><span style="color:#3a7fb4;border-bottom:1px dashed #3a7fb4;line-height:16px;display:inline-block">61</span></div>
<div style="position:absolute;left:1395px;top:551.0px;width:31px;height:15px;background:#18bc9c;border-radius:2px;color:#fff;font-size:10px;font-weight:bold;text-align:center;line-height:15px"><span class="c">开启</span></div>
<div style="position:absolute;left:1502px;top:551.0px;width:32px;height:15px;background:#18bc9c;border-radius:2px;color:#fff;font-size:10px;font-weight:bold;text-align:center;line-height:15px"><span class="c">启用</span></div>
<div style="position:absolute;left:1848px;top:548.0px;width:22px;height:20px;background:#18bc9c;border-radius:3px"></div>
<svg style="position:absolute;left:1854.5px;top:553.5px;" width="9" height="9" viewBox="0 0 9 9" fill="#fff"><path d="M6.5,0.3 L8.7,2.5 L3,8.2 L0.3,8.7 L0.8,6 Z"/></svg>
<div style="position:absolute;left:1873px;top:548.0px;width:21px;height:20px;background:#e74c3c;border-radius:3px"></div>
<svg style="position:absolute;left:1879.5px;top:553.5px;" width="8" height="9" viewBox="0 0 8 9" fill="#fff"><rect x="0" y="1.3" width="8" height="1.3"/><path d="M2.3,1.5 Q2.3,0 4,0 Q5.7,0 5.7,1.5 Z"/><path d="M0.8,2.6 L7.2,2.6 L6.9,9 L1.1,9 Z"/><g fill="#e74c3c" opacity="0.35"><rect x="2.3" y="3.6" width="0.8" height="4.2"/><rect x="4.9" y="3.6" width="0.8" height="4.2"/></g></svg>
<div style="position:absolute;left:272px;top:596.0px;width:13px;height:13px;box-sizing:border-box;border:1px solid #767676;border-radius:2px;background:#fff"></div>
<div class="t" style="left:296.5px;top:595.5px;width:71px;text-align:center;">347</div>
<div class="t" style="left:445.5px;top:595.5px;width:130px;text-align:center;">USCC</div>
<div class="t" style="left:575.5px;top:595.5px;width:127px;text-align:center;"><span class="c">铂</span></div>
<div class="t" style="left:828.5px;top:595.5px;width:126px;text-align:center;"><span class="c">商品</span></div>
<div class="t" style="left:954.5px;top:595.5px;width:143px;text-align:center;">7235.0004</div>
<div class="t" style="left:1097.5px;top:595.5px;width:250px;text-align:center;">2024-11-12 14:50:06</div>
<div class="t" style="left:1561.5px;top:595.5px;width:252px;text-align:center;">2024-06-14 11:14:25</div>
<div class="t" style="left:356.5px;top:595.5px;width:100px;text-align:center"><span style="color:#3a7fb4;border-bottom:1px dashed #3a7fb4;line-height:16px;display:inline-block">60</span></div>
<div style="position:absolute;left:1395px;top:598.0px;width:31px;height:15px;background:#18bc9c;border-radius:2px;color:#fff;font-size:10px;font-weight:bold;text-align:center;line-height:15px"><span class="c">开启</span></div>
<div style="position:absolute;left:1502px;top:598.0px;width:32px;height:15px;background:#18bc9c;border-radius:2px;color:#fff;font-size:10px;font-weight:bold;text-align:center;line-height:15px"><span class="c">启用</span></div>
<div style="position:absolute;left:1848px;top:595.0px;width:22px;height:20px;background:#18bc9c;border-radius:3px"></div>
<svg style="position:absolute;left:1854.5px;top:600.5px;" width="9" height="9" viewBox="0 0 9 9" fill="#fff"><path d="M6.5,0.3 L8.7,2.5 L3,8.2 L0.3,8.7 L0.8,6 Z"/></svg>
<div style="position:absolute;left:1873px;top:595.0px;width:21px;height:20px;background:#e74c3c;border-radius:3px"></div>
<svg style="position:absolute;left:1879.5px;top:600.5px;" width="8" height="9" viewBox="0 0 8 9" fill="#fff"><rect x="0" y="1.3" width="8" height="1.3"/><path d="M2.3,1.5 Q2.3,0 4,0 Q5.7,0 5.7,1.5 Z"/><path d="M0.8,2.6 L7.2,2.6 L6.9,9 L1.1,9 Z"/><g fill="#e74c3c" opacity="0.35"><rect x="2.3" y="3.6" width="0.8" height="4.2"/><rect x="4.9" y="3.6" width="0.8" height="4.2"/></g></svg>
<div style="position:absolute;left:272px;top:643.0px;width:13px;height:13px;box-sizing:border-box;border:1px solid #767676;border-radius:2px;background:#fff"></div>
<div class="t" style="left:296.5px;top:642.5px;width:71px;text-align:center;">348</div>
<div class="t" style="left:445.5px;top:642.5px;width:130px;text-align:center;">IT10YR</div>
<div class="t" style="left:575.5px;top:642.5px;width:127px;text-align:center;"><span class="c">镍</span></div>
<div class="t" style="left:828.5px;top:642.5px;width:126px;text-align:center;"><span class="c">商品</span></div>
<div class="t" style="left:954.5px;top:642.5px;width:143px;text-align:center;">3.5893</div>
<div class="t" style="left:1097.5px;top:642.5px;width:250px;text-align:center;">2024-11-12 14:50:05</div>
<div class="t" style="left:1561.5px;top:642.5px;width:252px;text-align:center;">2024-06-14 11:17:48</div>
<div class="t" style="left:356.5px;top:642.5px;width:100px;text-align:center"><span style="color:#3a7fb4;border-bottom:1px dashed #3a7fb4;line-height:16px;display:inline-block">59</span></div>
<div style="position:absolute;left:1395px;top:645.0px;width:31px;height:15px;background:#18bc9c;border-radius:2px;color:#fff;font-size:10px;font-weight:bold;text-align:center;line-height:15px"><span class="c">开启</span></div>
<div style="position:absolute;left:1502px;top:645.0px;width:32px;height:15px;background:#18bc9c;border-radius:2px;color:#fff;font-size:10px;font-weight:bold;text-align:center;line-height:15px"><span class="c">启用</span></div>
<div style="position:absolute;left:1848px;top:642.0px;width:22px;height:20px;background:#18bc9c;border-radius:3px"></div>
<svg style="position:absolute;left:1854.5px;top:647.5px;" width="9" height="9" viewBox="0 0 9 9" fill="#fff"><path d="M6.5,0.3 L8.7,2.5 L3,8.2 L0.3,8.7 L0.8,6 Z"/></svg>
<div style="position:absolute;left:1873px;top:642.0px;width:21px;height:20px;background:#e74c3c;border-radius:3px"></div>
<svg style="position:absolute;left:1879.5px;top:647.5px;" width="8" height="9" viewBox="0 0 8 9" fill="#fff"><rect x="0" y="1.3" width="8" height="1.3"/><path d="M2.3,1.5 Q2.3,0 4,0 Q5.7,0 5.7,1.5 Z"/><path d="M0.8,2.6 L7.2,2.6 L6.9,9 L1.1,9 Z"/><g fill="#e74c3c" opacity="0.35"><rect x="2.3" y="3.6" width="0.8" height="4.2"/><rect x="4.9" y="3.6" width="0.8" height="4.2"/></g></svg>
<div style="position:absolute;left:272px;top:690.0px;width:13px;height:13px;box-sizing:border-box;border:1px solid #767676;border-radius:2px;background:#fff"></div>
<div class="t" style="left:296.5px;top:689.5px;width:71px;text-align:center;">349</div>
<div class="t" style="left:445.5px;top:689.5px;width:130px;text-align:center;">XAUUSD</div>
<div class="t" style="left:575.5px;top:689.5px;width:127px;text-align:center;"><span class="c">国际黄金</span></div>
<div class="t" style="left:828.5px;top:689.5px;width:126px;text-align:center;"><span class="c">商品</span></div>
<div class="t" style="left:954.5px;top:689.5px;width:143px;text-align:center;">2606.4497</div>
<div class="t" style="left:1097.5px;top:689.5px;width:250px;text-align:center;">2024-11-12 14:50:06</div>
<div class="t" style="left:1561.5px;top:689.5px;width:252px;text-align:center;">2024-06-14 11:19:00</div>
<div class="t" style="left:356.5px;top:689.5px;width:100px;text-align:center"><span style="color:#3a7fb4;border-bottom:1px dashed #3a7fb4;line-height:16px;display:inline-block">58</span></div>
<div style="position:absolute;left:1395px;top:692.0px;width:31px;height:15px;background:#18bc9c;border-radius:2px;color:#fff;font-size:10px;font-weight:bold;text-align:center;line-height:15px"><span class="c">开启</span></div>
<div style="position:absolute;left:1502px;top:692.0px;width:32px;height:15px;background:#18bc9c;border-radius:2px;color:#fff;font-size:10px;font-weight:bold;text-align:center;line-height:15px"><span class="c">启用</span></div>
<div style="position:absolute;left:1848px;top:689.0px;width:22px;height:20px;background:#18bc9c;border-radius:3px"></div>
<svg style="position:absolute;left:1854.5px;top:694.5px;" width="9" height="9" viewBox="0 0 9 9" fill="#fff"><path d="M6.5,0.3 L8.7,2.5 L3,8.2 L0.3,8.7 L0.8,6 Z"/></svg>
<div style="position:absolute;left:1873px;top:689.0px;width:21px;height:20px;background:#e74c3c;border-radius:3px"></div>
<svg style="position:absolute;left:1879.5px;top:694.5px;" width="8" height="9" viewBox="0 0 8 9" fill="#fff"><rect x="0" y="1.3" width="8" height="1.3"/><path d="M2.3,1.5 Q2.3,0 4,0 Q5.7,0 5.7,1.5 Z"/><path d="M0.8,2.6 L7.2,2.6 L6.9,9 L1.1,9 Z"/><g fill="#e74c3c" opacity="0.35"><rect x="2.3" y="3.6" width="0.8" height="4.2"/><rect x="4.9" y="3.6" width="0.8" height="4.2"/></g></svg>
<div style="position:absolute;left:870.5px;top:603.5px;font-size:40px;line-height:46px;white-space:nowrap;transform:scaleY(1.04);transform-origin:0 0;color:rgba(70,130,195,0.18)">TG @yc099</div>
<div class="t" style="left:260px;top:740px;"><span class="c">显示第</span> 1 <span class="c">到第</span> 10 <span class="c">条记录，总共</span> 18 <span class="c">条记录</span> <span class="c">每页显示</span></div>
<div style="position:absolute;left:560.5px;top:735px;width:50px;height:30px;box-sizing:border-box;background:#f4f4f4;border:1px solid #ddd;border-radius:3px"></div>
<div class="t" style="left:574px;top:741px;font-size:12px">10</div>
<svg style="position:absolute;left:590px;top:748px;" width="8" height="4" viewBox="0 0 8 4" fill="#333"><path d="M0,4 L8,4 L4,0 Z"/></svg>
<div class="t" style="left:614.5px;top:740px;"><span class="c">条记录</span></div>
<div style="position:absolute;left:1736.5px;top:733px;width:192px;height:31.5px;box-sizing:border-box;background:#fafafa;border:1px solid #ddd;border-radius:3px"></div>
<div style="position:absolute;left:1800px;top:733px;width:33px;height:31.5px;background:#2c3e50"></div>
<div style="position:absolute;left:1864px;top:733px;width:1px;height:31.5px;background:#e5e5e5"></div>
<div class="t" style="left:1737.0px;top:739.5px;width:63px;text-align:center;color:#666"><span class="c">上一页</span></div>
<div class="t" style="left:1800.0px;top:739.5px;width:33px;text-align:center;color:#fff;font-weight:bold">1</div>
<div class="t" style="left:1833.0px;top:739.5px;width:31px;text-align:center;color:#666">2</div>
<div class="t" style="left:1864.5px;top:739.5px;width:64px;text-align:center;color:#666"><span class="c">下一页</span></div>
</body></html>
